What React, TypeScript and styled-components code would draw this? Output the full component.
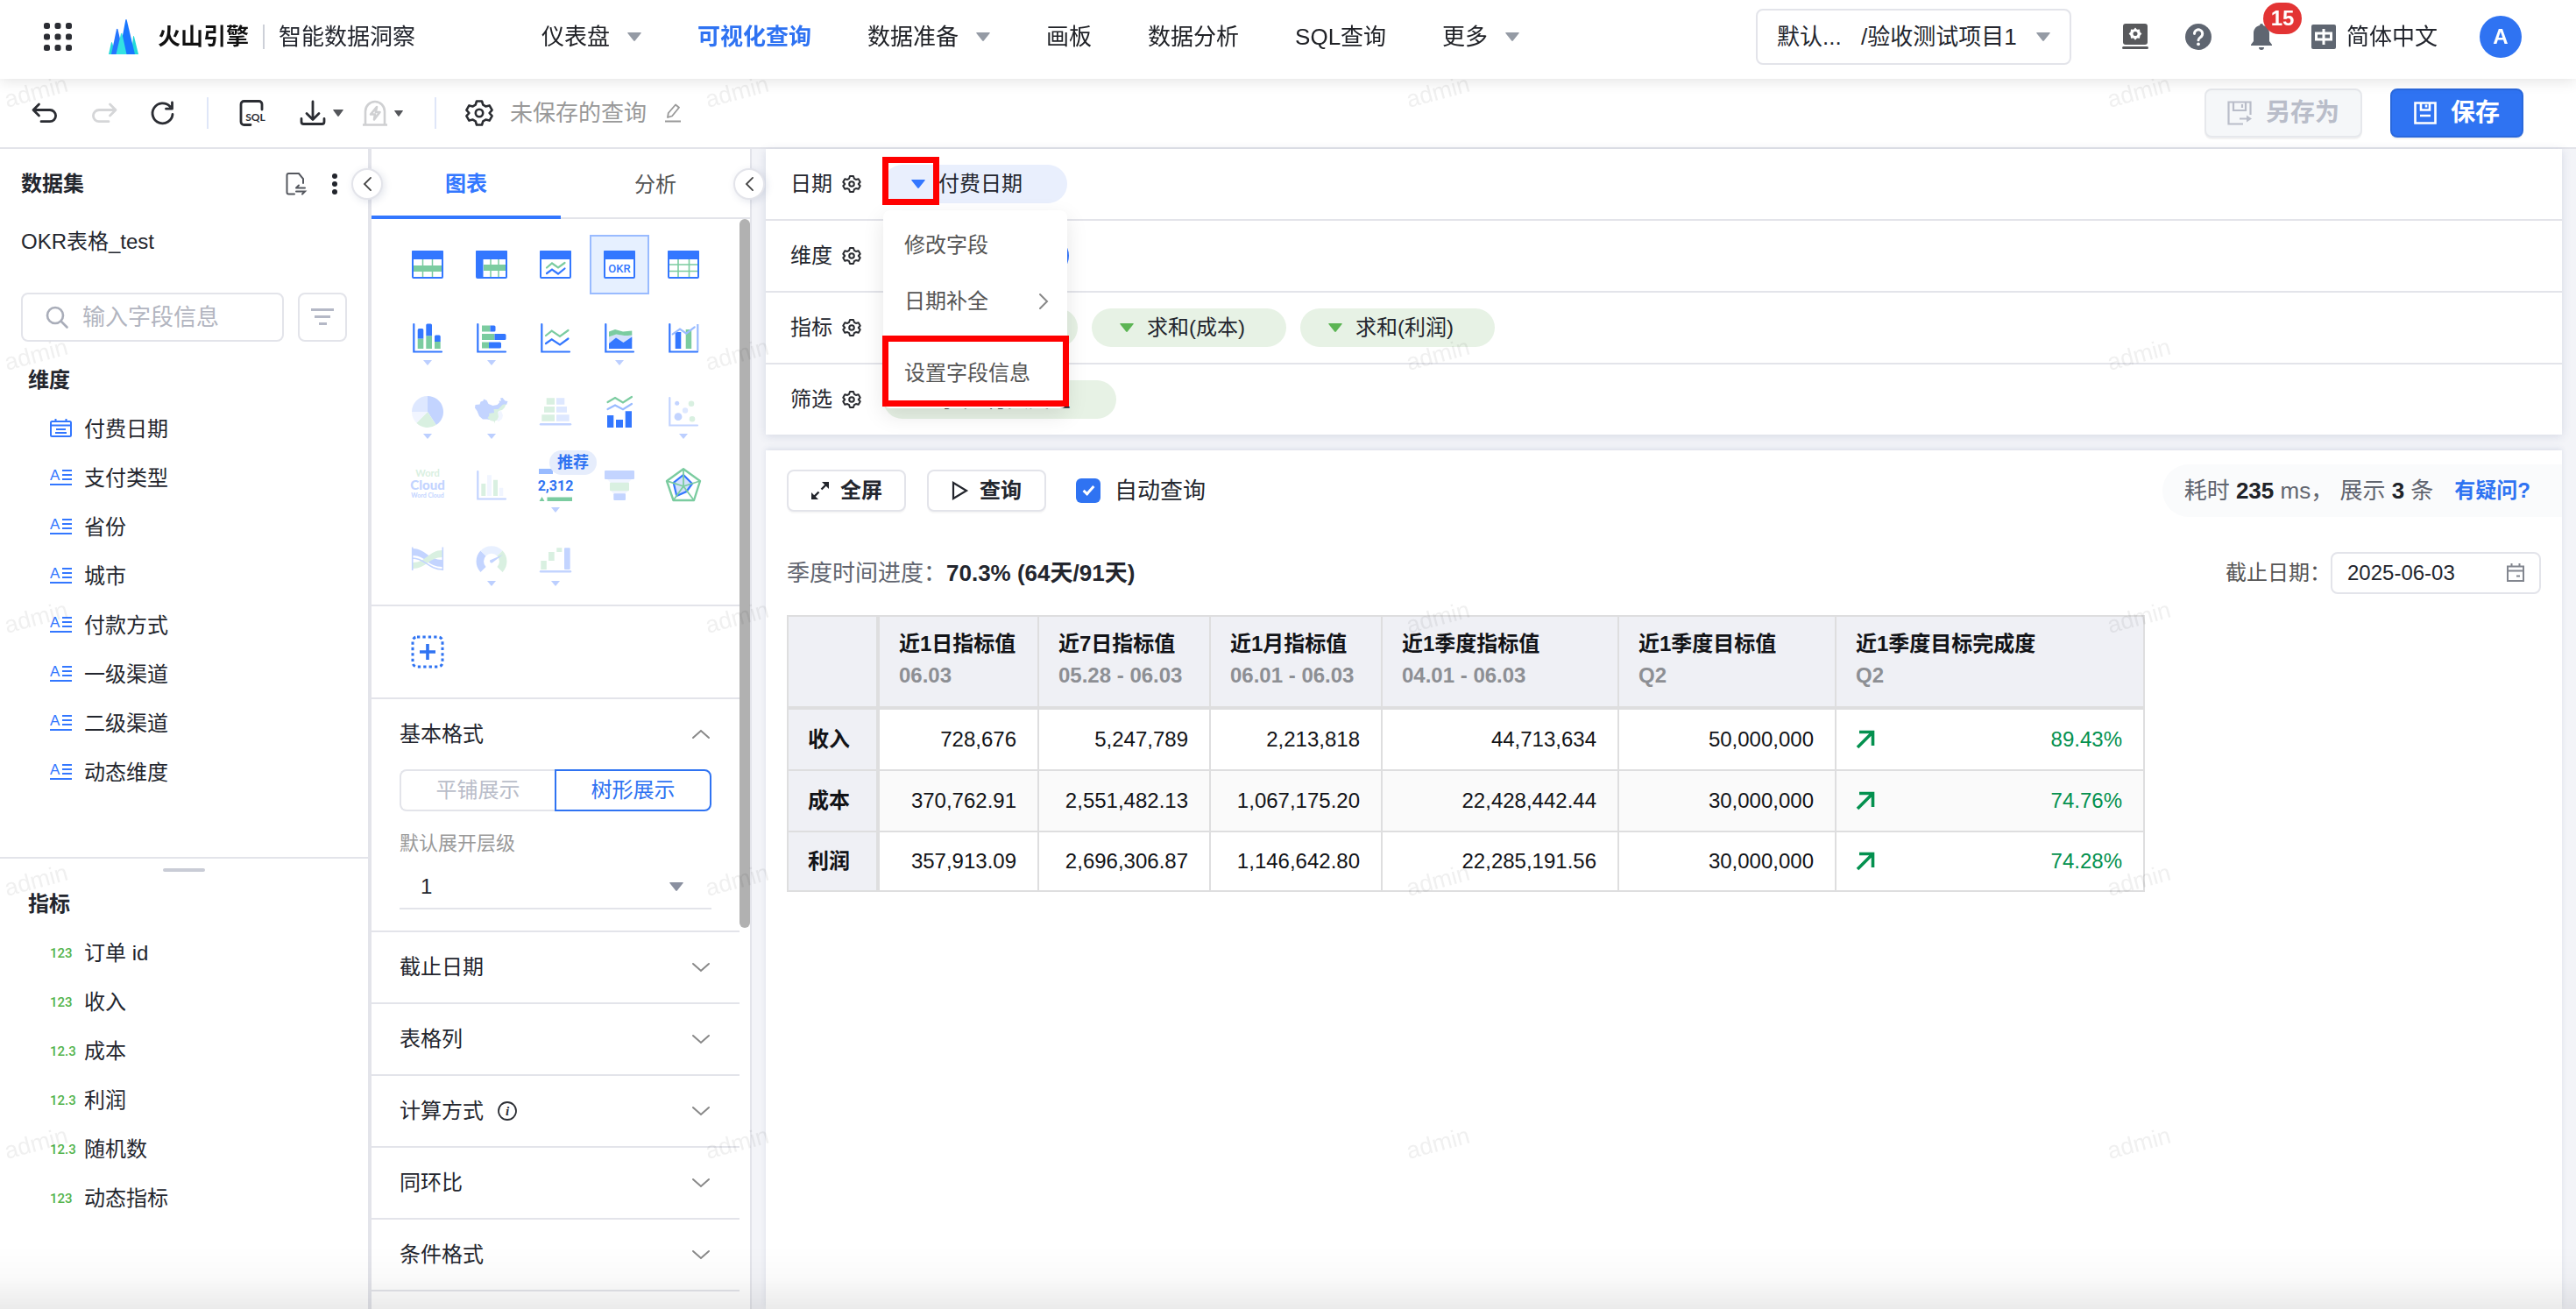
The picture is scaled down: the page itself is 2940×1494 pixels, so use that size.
import React from "react";
import styled, { createGlobalStyle, css } from "styled-components";

const blue = "#3377ff";
const green = "#7bcca0";
const softBlue = "#c3d4ff";
const softGreen = "#d9f0e1";
const paleBlue = "#deE8ff";
const faintBlue = "#f1f5ff";
const line = "#e3e4ea";
const ink = "#23262e";
const font = `"Liberation Sans", "Noto Sans CJK SC", sans-serif`;

const GlobalStyle = createGlobalStyle`
  *, *::before, *::after { box-sizing: border-box; }
  html, body { margin: 0; padding: 0; }
  body { font-family: ${font}; color: ${ink}; background: #fff; overflow: hidden; }
  button, input, select { font-family: inherit; color: inherit; margin: 0; line-height: 36px; }
  button { cursor: pointer; }
  svg { display: block; flex: none; overflow: visible; }
  ul, h2, p { margin: 0; padding: 0; }
  ul { list-style: none; }
`;

const Page = styled.div`
  display: flex;
  flex-direction: column;
  height: 100vh;
`;

const PlainButton = styled.button`
  display: flex;
  align-items: center;
  justify-content: center;
  padding: 0;
  border: 0;
  background: none;
`;

/* ---------- top bar ---------- */

const Header = styled.header`
  position: relative;
  z-index: 10;
  display: flex;
  align-items: center;
  flex: none;
  height: 90px;
  padding: 0 62px 6px 50px;
  background: #fff;
  box-shadow: 0 2px 16px rgba(0, 0, 0, 0.12);
  font-size: 26px;
  line-height: 40px;
`;

const Brand = styled.div`
  display: flex;
  align-items: center;
  width: 568px;
`;

const BrandName = styled.strong`
  margin-left: 22px;
  font-weight: 700;
  color: #111;
`;

const BrandRule = styled.span`
  width: 2px;
  height: 28px;
  margin: 0 16px;
  background: #cdd0d8;
`;

const LogoBox = styled.span`
  margin-left: 42px;
`;

const Nav = styled.nav`
  display: flex;
  gap: 64px;
  flex: 1;
`;

const NavLink = styled.a<{ $active?: boolean }>`
  display: flex;
  align-items: center;
  gap: 20px;
  color: ${(p) => (p.$active ? "#2f73f2" : "#202227")};
  font-weight: ${(p) => (p.$active ? 700 : 400)};
  text-decoration: none;
  white-space: nowrap;
`;

const ProjectPicker = styled.button`
  display: flex;
  align-items: center;
  justify-content: space-between;
  width: 360px;
  height: 64px;
  margin-right: 58px;
  padding: 0 22px;
  border: 2px solid ${line};
  border-radius: 8px;
  background: #fff;
  font-size: 26px;
  white-space: nowrap;
`;

const HeaderTools = styled.div`
  display: flex;
  align-items: center;
  gap: 42px;
`;

const BellButton = styled(PlainButton)`
  position: relative;
  width: 30px;
`;

const Badge = styled.span`
  position: absolute;
  left: 17px;
  top: -24px;
  width: 44px;
  height: 36px;
  border-radius: 18px;
  background: #e33434;
  color: #fff;
  font-size: 24px;
  font-weight: 700;
  line-height: 36px;
  text-align: center;
`;

const Language = styled(PlainButton)`
  gap: 12px;
  font-size: 26px;
  line-height: 40px;
`;

const Avatar = styled(PlainButton)`
  width: 48px;
  height: 48px;
  margin-left: 6px;
  border-radius: 50%;
  background: #2f73f2;
  color: #fff;
  font-size: 24px;
  font-weight: 700;
`;

/* ---------- tool bar ---------- */

const Toolbar = styled.div`
  display: flex;
  align-items: center;
  flex: none;
  height: 80px;
  padding: 0 60px 0 36px;
  border-bottom: 2px solid ${line};
`;

const ToolGroup = styled.div<{ $gap: number }>`
  display: flex;
  align-items: center;
  gap: ${(p) => p.$gap}px;
`;

const ToolRule = styled.span`
  width: 2px;
  height: 36px;
  margin: 0 34px 0 36px;
  background: #dfe6f8;
`;

const QueryName = styled.span`
  color: #999;
  font-size: 26px;
  line-height: 40px;
`;

const SaveActions = styled.div`
  display: flex;
  gap: 32px;
  margin-left: auto;
`;

const SaveButton = styled.button<{ $primary?: boolean }>`
  display: flex;
  align-items: center;
  justify-content: center;
  gap: 16px;
  width: ${(p) => (p.$primary ? 152 : 180)}px;
  height: 56px;
  padding: 0;
  border: 2px solid ${(p) => (p.$primary ? "#2a68dc" : "#e6e8ec")};
  border-radius: 8px;
  background: ${(p) => (p.$primary ? "#2f73f2" : "#f5f7f9")};
  color: ${(p) => (p.$primary ? "#fff" : "#b9bdc9")};
  box-shadow: 0 2px 0 rgba(0, 0, 0, 0.05);
  font-size: 28px;
  font-weight: 700;
`;

/* ---------- work area ---------- */

const Workspace = styled.div`
  display: flex;
  flex: 1;
  min-height: 0;
  background: #f3f4f8;
`;

const Sidebar = styled.aside`
  position: relative;
  flex: none;
  width: 424px;
  border-right: 4px solid ${line};
  background: #fff;
`;

const Collapse = styled(PlainButton)`
  position: absolute;
  z-index: 3;
  top: 22px;
  right: -17px;
  width: 36px;
  height: 36px;
  border: 2px solid ${line};
  border-radius: 50%;
  background: #fff;
  box-shadow: 2px 2px 8px rgba(60, 80, 130, 0.15);
`;

const SideHead = styled.div`
  display: flex;
  align-items: center;
  gap: 28px;
  height: 80px;
  padding: 0 34px 0 24px;

  h2 {
    flex: 1;
    font-size: 24px;
    font-weight: 700;
    line-height: 36px;
  }
`;

const DatasetName = styled.p`
  padding-left: 24px;
  font-size: 24px;
  line-height: 52px;
`;

const SearchRow = styled.div`
  display: flex;
  gap: 16px;
  margin: 32px 24px 16px;
`;

const SearchBox = styled.label`
  display: flex;
  align-items: center;
  flex: 1;
  gap: 16px;
  height: 56px;
  padding: 0 26px;
  border: 2px solid ${line};
  border-radius: 8px;

  input {
    width: 100%;
    min-width: 0;
    padding: 0;
    border: 0;
    outline: 0;
    background: none;
    font-size: 26px;
  }
  input::placeholder { color: #b2b5c0; opacity: 1; }
`;

const FilterButton = styled(PlainButton)`
  width: 56px;
  height: 56px;
  border: 2px solid ${line};
  border-radius: 8px;
`;

const FieldGroup = styled.section<{ $split?: boolean }>`
  position: relative;
  padding-bottom: 68px;
  ${(p) => p.$split && css`
    padding-top: 24px;
    border-top: 2px solid ${line};
  `}

  h2 {
    padding-left: 32px;
    font-size: 24px;
    font-weight: 700;
    line-height: 56px;
  }
`;

const DragHandle = styled.span`
  position: absolute;
  top: 11px;
  left: 50%;
  width: 48px;
  height: 4px;
  margin-left: -24px;
  border-radius: 2px;
  background: #c9ccd6;
`;

const FieldItem = styled.li`
  display: flex;
  align-items: center;
  gap: 14px;
  height: 56px;
  padding-left: 57px;
  font-size: 24px;
  line-height: 36px;
`;

const NumberTag = styled.span`
  width: 25px;
  color: #53b44c;
  font-family: Roboto, "Liberation Sans", sans-serif;
  font-size: 15px;
  font-weight: 500;
  line-height: 24px;
  white-space: nowrap;
`;

/* ---------- chart panel ---------- */

const ChartPanel = styled.aside`
  position: relative;
  display: flex;
  flex-direction: column;
  flex: none;
  width: 434px;
  border-right: 2px solid ${line};
  background: #fff;
`;

const Tabs = styled.div`
  display: flex;
  flex: none;
  height: 80px;
`;

const Tab = styled.button<{ $active?: boolean }>`
  flex: 1;
  padding: 4px 0 0;
  border: 0;
  border-bottom: ${(p) => (p.$active ? `4px solid ${blue}` : `2px solid ${line}`)};
  background: none;
  color: ${(p) => (p.$active ? blue : "#555")};
  font-size: 24px;
  font-weight: ${(p) => (p.$active ? 700 : 400)};
`;

const ScrollArea = styled.div`
  display: flex;
  flex: 1;
  min-height: 0;
`;

const ScrollBody = styled.div`
  flex: 1;
  overflow: hidden;
`;

const ScrollTrack = styled.div`
  width: 12px;
`;

const ScrollThumb = styled.div`
  height: 65%;
  border-radius: 6px;
  background: #b1b1b1;
`;

const ChartGrid = styled.div`
  display: grid;
  grid-template-columns: repeat(5, 68px);
  gap: 16px 5px;
  padding: 18px 30px;
  border-bottom: 2px solid ${line};
`;

const ChartCell = styled(PlainButton)<{ $selected?: boolean }>`
  position: relative;
  width: 68px;
  height: 68px;
  border: 2px solid ${(p) => (p.$selected ? "#99bbff" : "transparent")};
  background: ${(p) => (p.$selected ? "#e6f0ff" : "none")};
`;

const CellCaret = styled.svg`
  position: absolute;
  left: 50%;
  bottom: 1px;
  margin-left: -5px;
`;

const Recommend = styled.span`
  position: absolute;
  top: -8px;
  left: 25px;
  width: 54px;
  border-radius: 14px;
  background: #e6edfc;
  color: #2f73f2;
  font-size: 18px;
  font-weight: 700;
  line-height: 28px;
  text-align: center;
`;

const CustomCharts = styled.div`
  display: flex;
  height: 106px;
  padding-left: 45px;
  border-bottom: 2px solid ${line};
`;

const Section = styled.section`
  border-bottom: 2px solid ${line};
`;

const SectionHead = styled.button`
  display: flex;
  align-items: center;
  width: 100%;
  height: 80px;
  padding: 0 34px 0 32px;
  border: 0;
  background: none;
  color: ${ink};
  font-size: 24px;

  span { margin-right: 16px; }
  svg:last-child { margin-left: auto; }
`;

const SectionBody = styled.div`
  padding: 0 32px 24px;
`;

const Segments = styled.div`
  display: flex;
  height: 48px;
`;

const Segment = styled.button<{ $active?: boolean }>`
  flex: 1;
  padding: 0;
  border: 2px solid ${(p) => (p.$active ? "#2f73f2" : line)};
  border-radius: ${(p) => (p.$active ? "0 8px 8px 0" : "8px 0 0 8px")};
  ${(p) => !p.$active && "border-right: 0;"}
  background: #fff;
  color: ${(p) => (p.$active ? "#2f73f2" : "#b9bdc9")};
  font-size: 24px;
`;

const LevelLabel = styled.label`
  display: block;
  margin-top: 20px;
  color: #999;
  font-size: 22px;
  line-height: 34px;
`;

const LevelPicker = styled.div`
  display: flex;
  align-items: center;
  height: 58px;
  padding: 8px 32px 0 0;
  border-bottom: 2px solid ${line};

  select {
    flex: 1;
    padding: 0 0 0 24px;
    border: 0;
    outline: 0;
    appearance: none;
    background: none;
    font-size: 24px;
  }
`;

/* ---------- main column ---------- */

const Main = styled.main`
  display: flex;
  flex-direction: column;
  flex: 1;
  min-width: 0;
  margin: 0 16px;
`;

const Shelves = styled.div`
  position: relative;
  z-index: 2;
  background: #fff;
  box-shadow: 0 2px 10px rgba(60, 80, 130, 0.16);
`;

const Shelf = styled.div`
  display: flex;
  align-items: center;
  height: 82px;
  padding: 0 28px;
  border-bottom: 2px solid ${line};
  font-size: 24px;
  line-height: 36px;

  &:last-child { height: 80px; border-bottom: 0; }
`;

const ShelfLabel = styled.span`
  margin-right: 12px;
`;

const Pills = styled.div`
  display: flex;
  gap: 16px;
  margin-left: 26px;
`;

const PillSlot = styled.div`
  position: relative;
`;

const Pill = styled.button<{ $tone: "blue" | "green" | "active"; $wide?: boolean }>`
  display: flex;
  align-items: center;
  gap: 15px;
  min-width: ${(p) => (p.$wide ? 266 : p.$tone === "active" ? 212 : 210)}px;
  height: 44px;
  padding: 0 47px 0 32px;
  border: 0;
  border-radius: 22px;
  background: ${(p) => ({ blue: "#e9effd", green: "#e7f2e5", active: blue })[p.$tone]};
  color: ${ink};
  font-size: 24px;
  white-space: nowrap;
`;

const Menu = styled.div`
  position: absolute;
  z-index: 4;
  top: 52px;
  left: 0;
  width: 210px;
  padding: 8px 0;
  border-radius: 8px;
  background: #fff;
  box-shadow: 0 8px 24px rgba(0, 0, 0, 0.1);
`;

const MenuItem = styled.button<{ $apart?: boolean }>`
  display: flex;
  align-items: center;
  justify-content: space-between;
  width: 100%;
  height: 64px;
  margin-top: ${(p) => (p.$apart ? 18 : 0)}px;
  padding: 0 22px 0 24px;
  border: 0;
  background: none;
  color: #555;
  font-size: 24px;
`;

const Highlight = styled.span<{ $top: number; $width: number; $height: number }>`
  position: absolute;
  z-index: 5;
  left: -1px;
  top: ${(p) => p.$top}px;
  width: ${(p) => p.$width}px;
  height: ${(p) => p.$height}px;
  border: 7px solid #ff0000;
  pointer-events: none;
`;

const Results = styled.section`
  flex: 1;
  margin-top: 18px;
  padding-top: 16px;
  background: #fff;
  box-shadow: 0 -2px 6px rgba(60, 80, 130, 0.12);
`;

const ResultBar = styled.div`
  display: flex;
  align-items: center;
  height: 60px;
  padding-left: 24px;
`;

const ActionButton = styled.button`
  display: flex;
  align-items: center;
  justify-content: center;
  gap: 12px;
  width: 136px;
  height: 48px;
  margin-right: 24px;
  padding: 0;
  border: 2px solid ${line};
  border-radius: 8px;
  background: #fff;
  box-shadow: 0 2px 0 rgba(0, 0, 0, 0.03);
  font-size: 24px;
  font-weight: 700;
`;

const AutoQuery = styled.label`
  display: flex;
  align-items: center;
  gap: 16px;
  margin-left: 10px;
  font-size: 26px;
  line-height: 40px;

  input {
    display: grid;
    place-items: center;
    width: 28px;
    height: 28px;
    margin: 0;
    border-radius: 6px;
    appearance: none;
    background: #2f73f2;
  }
  input::after {
    content: "";
    width: 7px;
    height: 13px;
    margin-bottom: 4px;
    border: solid #fff;
    border-width: 0 3px 3px 0;
    transform: rotate(42deg);
  }
`;

const Stats = styled.div`
  display: flex;
  align-items: center;
  height: 60px;
  margin-left: auto;
  padding: 0 36px 0 25px;
  border-radius: 30px 0 0 30px;
  background: #fafbfc;
  color: #61656f;
  font-size: 26px;
  line-height: 40px;
  white-space: pre;

  b { color: #202329; }
  a {
    margin-left: 24px;
    color: #2f73f2;
    font-size: 24px;
    font-weight: 700;
    text-decoration: none;
  }
`;

const DateBar = styled.div`
  display: flex;
  align-items: center;
  justify-content: space-between;
  height: 48px;
  margin: 40px 24px 24px;
  font-size: 26px;
  line-height: 40px;
  color: #61656f;

  b { color: #23262e; }
`;

const DateField = styled.label`
  display: flex;
  align-items: center;
  color: #555;
  font-size: 24px;
`;

const DateBox = styled.span`
  display: flex;
  align-items: center;
  width: 240px;
  height: 48px;
  padding: 0 17px;
  border: 2px solid ${line};
  border-radius: 8px;

  input {
    flex: 1;
    min-width: 0;
    padding: 0;
    border: 0;
    outline: 0;
    background: none;
    color: ${ink};
    font-size: 24px;
  }
`;

const Table = styled.table`
  margin-left: 24px;
  border-spacing: 0;
  border-left: 2px solid #dededf;
  table-layout: fixed;
  width: 1550px;
  font-size: 24px;
  line-height: 36px;
  color: #121317;

  th, td {
    padding: 0 24px 0 22px;
    border-right: 2px solid #dededf;
    border-bottom: 2px solid #dededf;
  }
  thead th {
    height: 108px;
    border-top: 2px solid #dededf;
    border-bottom-width: 4px;
    background: #eff0f5;
    text-align: left;
    vertical-align: top;
    padding-top: 13px;
    white-space: nowrap;
  }
  th { font-weight: 700; }
  th:first-child { border-right-width: 4px; }
  thead small { display: block; color: #8d8f94; font-size: 24px; }
  tbody th { background: #eff0f5; text-align: left; }
  tbody td { height: 70px; text-align: right; }
  tbody tr:nth-child(2) td { background: #fafafa; }
  tbody tr:last-child td { height: 68px; }
`;

const Rate = styled.span`
  display: flex;
  align-items: center;
  justify-content: space-between;
  color: #04914f;
`;

const Watermark = styled.svg`
  position: fixed;
  z-index: 6;
  inset: 0;
  width: 100%;
  height: 100%;
  pointer-events: none;
`;

const BottomShade = styled.div`
  position: fixed;
  z-index: 7;
  left: 0;
  right: 0;
  bottom: 0;
  height: 72px;
  background: linear-gradient(to bottom, rgba(0, 0, 0, 0), rgba(0, 0, 0, 0.02) 50%, rgba(0, 0, 0, 0.08));
  pointer-events: none;
`;

/* ---------- icons ---------- */

const Caret = ({ size = 14, color = "#959ba5" }: { size?: number; color?: string }) => (
  <svg width={size} height={Math.round(size * 0.65)} viewBox="0 0 16 10" preserveAspectRatio="none" aria-hidden="true">
    <path d="M1 0h14q1.400 0 .6 1L9 9.300q-1 1.200-2 0L.4 1Q-.4 0 1 0Z" fill={color} />
  </svg>
);

const Chevron = ({ dir, w = 10, h = 18, color = "#888" }: { dir: "left" | "right" | "up" | "down"; w?: number; h?: number; color?: string }) => {
  const d = { left: "M9 1 1 9l8 8", right: "M1 1l8 8-8 8", up: "M1 9l9-8 9 8", down: "M1 1l9 8 9-8" }[dir];
  const box = dir === "up" || dir === "down" ? "0 0 20 10" : "0 0 10 18";
  return (
    <svg width={w} height={h} viewBox={box} aria-hidden="true">
      <path d={d} fill="none" stroke={color} strokeWidth="2" strokeLinecap="round" />
    </svg>
  );
};

const Gear = ({ size }: { size: number }) => (
  <svg width={size} height={size} viewBox="0 0 30 30" fill="none" stroke="#2a2c31" strokeWidth={size > 24 ? 2.6 : 3} strokeLinejoin="round" aria-hidden="true">
    <path d="M12 1.500h6l1.300 4.200 3 1.700 4.300-1 3 5.200-3 3.400 3 3.400-3 5.200-4.300-1-3 1.700-1.300 4.200h-6l-1.300-4.200-3-1.700-4.300 1-3-5.200 3-3.400-3-3.400 3-5.200 4.300 1 3-1.700Z" />
    <circle cx="15" cy="15" r="4.200" />
  </svg>
);

const AppsIcon = () => (
  <svg width="32" height="32" fill="#2b2d33" aria-hidden="true">
    {[0, 12.500, 25].map((x) => [0, 12.500, 25].map((y) => <rect key={`${x}-${y}`} x={x} y={y} width="7" height="7" rx="2.500" />))}
  </svg>
);

const Logo = () => (
  <svg width="34" height="40" viewBox="0 0 34 40" aria-label="火山引擎" role="img">
    <path d="M0 40 3 26.500q.5-1 1 0L8 40ZM26 40l2-20.500q.5-1.200 1 0L34 40Z" fill="#23d9d9" />
    <path d="M3 40 9 11.500q.8-1.500 1.500 0L17 40Z" fill="#2676ff" />
    <path d="M12 40 19.300.8q.7-1.500 1.400 0L30 40Z" fill="#1877ff" />
    <path d="M8.500 40 14 16.500q.7-1.500 1.400 0L20.500 40Z" fill="#33e2e2" />
  </svg>
);

const ServiceIcon = () => (
  <svg width="30" height="30" viewBox="0 0 30 30" aria-hidden="true">
    <rect x="1" y="0" width="28" height="24" rx="3" fill="#58595c" />
    <rect x="0" y="26" width="30" height="3" rx="1.500" fill="#58595c" />
    <path d="M15 4.500l2 2.300 3-.4.400 3 2 2.200-2 2.200-.4 3-3-.4-2 2.300-2-2.300-3 .4-.4-3-2-2.200 2-2.200.4-3 3 .4Z" fill="#fff" />
    <circle cx="15" cy="11.600" r="2.500" fill="#58595c" />
  </svg>
);

const HelpIcon = () => (
  <svg width="30" height="30" viewBox="0 0 30 30" aria-hidden="true">
    <circle cx="15" cy="15" r="15" fill="#5f6671" />
    <path d="M10.500 11.500a4.600 4.600 0 1 1 7 3.900c-1.700 1.100-2.500 1.700-2.500 3.400" fill="none" stroke="#fff" strokeWidth="3" strokeLinecap="round" />
    <circle cx="15" cy="23.300" r="1.900" fill="#fff" />
  </svg>
);

const BellIcon = () => (
  <svg width="26" height="30" viewBox="0 0 26 30" fill="#5f6671" aria-hidden="true">
    <path d="M13 0a2 2 0 0 1 2 2c4.500 1 7 4.500 7 9v9l3 4v1H1v-1l3-4v-9c0-4.500 2.500-8 7-9a2 2 0 0 1 2-2ZM10 27h6a3 3 0 0 1-6 0Z" />
  </svg>
);

const LangIcon = () => (
  <svg width="28" height="28" viewBox="0 0 28 28" aria-hidden="true">
    <rect width="28" height="28" rx="2" fill="#5f6671" />
    <path d="M5.500 10h17v7h-17ZM14 5v18" fill="none" stroke="#fff" strokeWidth="3" />
  </svg>
);

const UndoIcon = ({ flip }: { flip?: boolean }) => (
  <svg width="30" height="24" viewBox="0 0 30 24" fill="none" stroke={flip ? "#d5d6d8" : "#2b2d33"} strokeWidth="2.800" strokeLinecap="round" strokeLinejoin="round" aria-hidden="true">
    <path d={flip ? "M21.500 2 28 8.500 21.500 15M27 8.500H9a6.500 6.500 0 0 0 0 13.200h11" : "M8.500 2 2 8.500 8.500 15M3 8.500h18a6.500 6.500 0 0 1 0 13.200H11"} />
  </svg>
);

const RefreshIcon = () => (
  <svg width="28" height="28" viewBox="0 0 28 28" fill="none" stroke="#2b2d33" strokeWidth="2.800" strokeLinecap="round" strokeLinejoin="round" aria-hidden="true">
    <path d="M25 15.500A11.500 11.500 0 1 1 22 6.500M24.500 2v7.200h-7" />
  </svg>
);

const SqlIcon = () => (
  <svg width="32" height="30" viewBox="0 0 32 30" aria-hidden="true">
    <path d="M27 11V5a3.500 3.500 0 0 0-3.500-3.500h-17A3.500 3.500 0 0 0 3 5v20a3.500 3.500 0 0 0 3.500 3.500H14" fill="none" stroke="#2b2d33" strokeWidth="2.800" strokeLinecap="round" />
    <text x="19.500" y="23.500" textAnchor="middle" fontSize="12" fontWeight="700" fontFamily="Lato, sans-serif" fill="#2b2d33">SQL</text>
  </svg>
);

const DownloadIcon = () => (
  <svg width="30" height="28" viewBox="0 0 30 28" fill="none" stroke="#2b2d33" strokeWidth="2.800" strokeLinecap="round" strokeLinejoin="round" aria-hidden="true">
    <path d="M15 1v20M8 14.500l7 7 7-7M2 20.500V24q0 2.500 2.500 2.500h21Q28 26.500 28 24v-3.500" />
  </svg>
);

const AlarmIcon = () => (
  <svg width="28" height="30" viewBox="0 0 28 30" fill="none" stroke="#cfd0d2" strokeWidth="2.600" strokeLinejoin="round" aria-hidden="true">
    <path d="M3 28V13a11 11 0 0 1 22 0v15M0 28.500h28M16 8l-7 8.500h5l-1 6 6.500-8.500h-4.700Z" />
  </svg>
);

const PencilIcon = () => (
  <svg width="20" height="22" viewBox="0 0 20 22" fill="none" stroke="#999" strokeWidth="1.800" strokeLinejoin="round" aria-hidden="true">
    <path d="M4 16l.8-5L13 1.500l4 3.300L9 14.500ZM1 20.500h18" />
  </svg>
);

const SaveAsIcon = () => (
  <svg width="28" height="28" viewBox="0 0 28 28" fill="none" stroke="#b9bdc9" strokeWidth="2.200" aria-hidden="true">
    <path d="M26.500 16V1.500h-25v25H18M7 1.500V11h14V1.500M17 4v4M14 20.500h11" />
    <path d="M22 16.500l6 4-6 4Z" fill="#b9bdc9" stroke="none" />
  </svg>
);

const SaveIcon = () => (
  <svg width="26" height="26" viewBox="0 0 26 26" fill="none" stroke="#fff" strokeWidth="2.600" aria-hidden="true">
    <path d="M1.500 1.500h23v23h-23ZM8 1.500v8h10v-8M14 3.500v3M7 16h12" />
  </svg>
);

const DocSwapIcon = () => (
  <svg width="24" height="26" viewBox="0 0 24 26" fill="none" stroke="#55585f" strokeWidth="2" strokeLinecap="round" aria-hidden="true">
    <path d="M20 12V7l-5-6H3.500Q1.500 1 1.500 3v19.500q0 2 2 2H10M12 17.500h10M15 14.500l-3 3M12 21.500h10l-3 3" />
  </svg>
);

const MoreIcon = () => (
  <svg width="8" height="26" fill="#22252c" aria-hidden="true">
    <circle cx="4" cy="4" r="3" /><circle cx="4" cy="13" r="3" /><circle cx="4" cy="22" r="3" />
  </svg>
);

const SearchIcon = () => (
  <svg width="26" height="26" viewBox="0 0 26 26" fill="none" stroke="#a9adb9" strokeWidth="2.600" strokeLinecap="round" aria-hidden="true">
    <circle cx="11" cy="11" r="9" /><path d="M18 18l6.500 6.500" />
  </svg>
);

const FilterIcon = () => (
  <svg width="26" height="20" fill="#b4b8c6" aria-hidden="true">
    <rect width="26" height="3" /><rect x="4" y="8" width="18" height="3" /><rect x="9" y="16" width="9" height="3" />
  </svg>
);

const CalendarField = () => (
  <svg width="25" height="22" viewBox="0 0 25 22" fill="none" stroke={blue} strokeWidth="2" aria-hidden="true">
    <rect x="1" y="2" width="23" height="17" rx="1.500" /><path d="M1 6.500h23M6.500-1v3M18.500-1v3M7 11h11M6 15h13" />
  </svg>
);

const TextField = () => (
  <svg width="25" height="22" viewBox="0 0 25 22" stroke={blue} strokeWidth="2" aria-hidden="true">
    <text x="0" y="13" fontSize="17" fill={blue} stroke="none" fontFamily={font}>A</text>
    <path d="M14 2h11M14 7h11M14 12h11M0 18h25" />
  </svg>
);

const InfoIcon = () => (
  <svg width="22" height="22" viewBox="0 0 22 22" aria-hidden="true">
    <circle cx="11" cy="11" r="10" fill="none" stroke="#2b2d33" strokeWidth="1.800" />
    <text x="11" y="16" textAnchor="middle" fontSize="15" fontStyle="italic" fontWeight="700" fontFamily="Liberation Serif, serif" fill="#2b2d33">i</text>
  </svg>
);

const ExpandIcon = () => (
  <svg width="22" height="22" viewBox="0 0 22 22" fill="none" stroke="#22252c" strokeWidth="2.400" aria-hidden="true">
    <path d="M12.500 9.500 19 3M9.500 12.500 3 19" /><path d="M13 1h8v8ZM1 13v8h8Z" fill="#22252c" stroke="none" />
  </svg>
);

const PlayIcon = () => (
  <svg width="20" height="22" viewBox="0 0 20 22" fill="none" stroke="#22252c" strokeWidth="2.200" aria-hidden="true">
    <path d="M2 2l15 9-15 9Z" />
  </svg>
);

const CalendarIcon = () => (
  <svg width="20" height="22" viewBox="0 0 20 22" fill="none" stroke="#82868f" strokeWidth="2" aria-hidden="true">
    <path d="M1 3.500h18V20H1ZM1 8.500h18M5.500 0v4M14.500 0v4M11 14.500h4" />
  </svg>
);

const TrendUp = () => (
  <svg width="22" height="22" viewBox="0 0 22 22" fill="none" stroke="#04914f" strokeWidth="3.600" role="img" aria-label="上升">
    <path d="M4 2.500h15.500V18M19 3 2 20" />
  </svg>
);

const Frame = ({ children }: { children?: React.ReactNode }) => (
  <>
    <rect x="1" y="3" width="34" height="30" rx="1" fill="#fff" />
    {children}
    <rect x="1" y="3" width="34" height="30" rx="1" fill="none" stroke={blue} strokeWidth="2" />
    <rect x="0" y="2" width="36" height="10" rx="1" fill={blue} />
  </>
);

const Axes = ({ color = blue }: { color?: string }) => (
  <path d="M2.300 2v31.500H34" fill="none" stroke={color} strokeWidth="2.200" strokeLinecap="round" />
);

const Zig = ({ points, color }: { points: string; color: string }) => (
  <polyline points={points} fill="none" stroke={color} strokeWidth="2.200" strokeLinecap="round" />
);

type ChartKind = { id: string; label: string; caret?: boolean; selected?: boolean; tag?: string; art: React.ReactNode };

const charts: ChartKind[] = [
  { id: "table", label: "表格", art: <Frame><path d="M12.500 12v21M23.500 12v21" stroke={green} strokeWidth="1.500" /><rect x="1" y="19" width="34" height="7" fill={green} /></Frame> },
  { id: "pivot", label: "透视表", art: <Frame><path d="M17 12v21M26 12v21" stroke={green} strokeWidth="1.500" /><rect x="9" y="18" width="26" height="7" fill={green} /><rect x="1" y="8" width="7.500" height="25" fill={blue} /></Frame> },
  { id: "trend", label: "趋势表", art: <Frame><Zig points="8,21.500 14,16.500 21,21.500 28.500,16" color={green} /><Zig points="8,28 14,23.500 21,28.500 28.500,22.500" color={blue} /></Frame> },
  { id: "okr", label: "OKR表格", selected: true, art: <Frame><text x="18" y="27" textAnchor="middle" fontSize="13" fontFamily="Roboto, sans-serif" fontWeight="500" fill={blue}>OKR</text></Frame> },
  { id: "detail", label: "明细表", art: <Frame><path d="M12 12v21M24.500 12v21M1 18h34M1 25.500h34" stroke={green} strokeWidth="1.600" /></Frame> },
  {
    id: "column", label: "柱状图", caret: true, art: <><Axes />
      <path d="M6.700 18.500h6.600V30H6.700ZM16.300 15.300H23V30h-6.700ZM26 22h6.700v8H26Z" fill={green} />
      <path d="M6.700 18.500V8.500q0-1.500 1.500-1.500h3.600q1.500 0 1.500 1.500v10ZM16.300 15.300V3q0-1.500 1.500-1.500h3.700Q23 1.500 23 3v12.300ZM26 22v-6q0-1.500 1.500-1.500h3.700q1.500 0 1.500 1.500v6Z" fill={blue} /></>,
  },
  {
    id: "bar", label: "条形图", caret: true, art: <><Axes />
      <path d="M7 3.500h9.500v7H7ZM7 13h14.500v7H7ZM7 22.500h8v7H7Z" fill={green} />
      <path d="M16.500 3.500H21q1.500 0 1.500 1.500v4q0 1.500-1.500 1.500h-4.500ZM21.500 13H33q1.500 0 1.500 1.500v4q0 1.500-1.500 1.500H21.500ZM15 22.500h12.500q1.500 0 1.500 1.500v4q0 1.500-1.500 1.500H15Z" fill={blue} /></>,
  },
  { id: "line", label: "折线图", art: <><Axes /><Zig points="7,15 13.700,9.700 23,16 32.500,9" color={green} /><Zig points="7,24 13.700,19.300 23,25.500 32.500,18.500" color={blue} /></> },
  {
    id: "area", label: "面积图", caret: true, art: <><Axes />
      <path d="M6 17l8-4 9 2 9.300-2v9L6 28Z" fill="#d3e0fb" />
      <path d="M6 10.500 13 8l9 2.500 10.300-1v5q-5 .5-9 .5l-9-1.500L6 16.500Z" fill={green} />
      <path d="M6 24l8-6.500 8.500 5.500 9.800-6.500V30H6Z" fill={blue} /></>,
  },
  {
    id: "combo", label: "双轴图", art: <><Axes /><path d="M34.300 2v31" stroke="#99bbff" strokeWidth="2.200" />
      <rect x="8.700" y="11" width="6.600" height="19" fill={blue} /><rect x="20.700" y="8" width="6.500" height="22" fill={green} />
      <Zig points="5.700,13.300 14,7.700 21.300,12.700 30.700,5.300" color="#99bbff" /></>,
  },
  {
    id: "pie", label: "饼图", caret: true, art: <>
      <path d="M18 18V0a18 18 0 0 1 9.800 33.100Z" fill={softBlue} /><path d="M18 18l9.800 15.100A18 18 0 0 1 5.300 30.700Z" fill={softGreen} />
      <path d="M18 18 5.300 30.700A18 18 0 0 1 0 18Z" fill={faintBlue} /><path d="M18 18H0A18 18 0 0 1 18 0Z" fill={paleBlue} /></>,
  },
  {
    id: "map", label: "地图", caret: true, art: <>
      <path d="M-.5 10l5-.5 1-3 3-1 .5-2 3.500 1.500 2 4 5 2 5-1 2.500-2.500-.5-2 2.500 0-1-3 2.500-.5 3 3.500 3 .5-1.500 4-3 .5-1.500 3-4 2-1.500 4-2 6-5 2-5-1-5 0-4-3.500-2.500-6-2.500-3.500Z" fill={softBlue} />
      <path d="M15 20l6-1-.5-4 5 0 5-5 4-1-1.500 4-3 3-4 1 1 4-2 6-3 1.500 0 3-1-2.500-4-1-3.500-3 2-3Z" fill={softGreen} />
      <path d="M25 18l4-1 2 5-1 4-4 3-2-1 2-4Z" fill={faintBlue} /></>,
  },
  {
    id: "pyramid", label: "对比条形图", art: <>
      <path d="M7.700 2.300H17v7.400H7.700ZM5 12h12v6.700H5ZM2.300 21.300H17v7.400H2.300Z" fill={softGreen} />
      <path d="M19 2.300h9.300v7.400H19ZM19 12h12v6.700H19ZM19 21.300h14.700v7.400H19Z" fill={paleBlue} />
      <path d="M1 32.300h34" stroke={softBlue} strokeWidth="2.400" strokeLinecap="round" /></>,
  },
  {
    id: "mixed", label: "组合图", art: <>
      <Zig points="4.500,7 13,2 22,7.500 32,1" color={green} /><Zig points="4.500,15 13,10.500 22,15.300 32,9" color="#99bbff" />
      <path d="M4 22h7.300v14H4ZM14 27h8v9h-8ZM24.700 17.300H32V36h-7.300Z" fill={blue} /></>,
  },
  {
    id: "scatter", label: "散点图", caret: true, art: <><Axes color={softBlue} />
      <circle cx="10.700" cy="8.300" r="2.500" fill={softBlue} /><circle cx="27" cy="8.700" r="3.300" fill={softGreen} />
      <circle cx="20" cy="16.500" r="3.200" fill={paleBlue} /><circle cx="12" cy="23.700" r="4.400" fill={softBlue} /><circle cx="28" cy="26.300" r="3.300" fill={softGreen} /></>,
  },
  {
    id: "cloud", label: "词云", art: <g textAnchor="middle" fontFamily="Lato, sans-serif" fontWeight="700">
      <text x="18" y="8" fontSize="11" fill={softGreen}>Word</text><text x="18" y="23" fontSize="15" fontWeight="900" fill={softBlue}>Cloud</text>
      <text x="18" y="32" fontSize="7" fill={softBlue}>Word Cloud</text></g>,
  },
  {
    id: "histogram", label: "直方图", art: <><Axes color={softBlue} />
      <path d="M6.300 16h5v14h-5ZM20 11.700h5V30h-5Z" fill={softGreen} /><path d="M13 6.300h5V30h-5ZM26.700 20.700h4.500V30h-4.500Z" fill={faintBlue} /></>,
  },
  {
    id: "metric", label: "指标卡", caret: true, tag: "推荐", art: <>
      <rect x="-1" y="-1" width="16" height="6" fill="#99bbff" />
      <text x="18" y="24" textAnchor="middle" fontSize="16" fontWeight="700" fontFamily="Roboto, sans-serif" fill="#2f73f2">2,312</text>
      <path d="M-.5 36 2.500 31l3 5ZM8.500 31.500H37V36H8.500Z" fill={green} /></>,
  },
  {
    id: "funnel", label: "漏斗图", art: <>
      <path d="M4 11h28l-4 4H8ZM8 24h20l-4 4H12Z" fill={faintBlue} /><rect x="1" y="1" width="34" height="10" rx="1" fill={softBlue} />
      <rect x="7" y="14.700" width="22" height="9.500" rx="1" fill={softGreen} /><rect x="11.300" y="27.300" width="13.700" height="7.700" rx="1" fill={softBlue} /></>,
  },
  {
    id: "radar", label: "雷达图", art: <>
      <path d="M18-.7 37 13 30 35H6.500L-1 13Z" fill="none" stroke={green} strokeWidth="2.400" strokeLinejoin="round" />
      <path d="M18 6 28 16l-6.500 9L10.300 30 6.700 15Z" fill="#d3e0fb" stroke={blue} strokeWidth="2.200" />
      <path d="M18 19V-.7M18 19l19-6M18 19l12 16M18 19 6.500 35M18 19-1 13" stroke={green} strokeWidth="1.800" /></>,
  },
  {
    id: "sankey", label: "桑基图", art: <>
      <path d="M1 6c14 0 18 13 34 13v8C18 27 16 14 1 14Z" fill={softBlue} />
      <path d="M1 22c16 0 18-14 34-14v8C20 16 16 29 1 29Z" fill={softGreen} />
      <path d="M1 17c14 0 18 13 34 13M.7 4.500v26.500M35.300 4.500v26.500" fill="none" stroke={softBlue} strokeWidth="1.600" /></>,
  },
  {
    id: "gauge", label: "仪表盘", caret: true, art: <g fill="none" strokeWidth="8.500">
      <path d="M8.500 30A13.400 13.400 0 0 1 8.500 11.500" stroke={softBlue} /><path d="M8.500 11.500a13.400 13.400 0 0 1 19 0" stroke="#e8f0ff" />
      <path d="M27.500 11.500a13.400 13.400 0 0 1 0 18.500" stroke={softGreen} /><path d="M16 19.500 31 13l-12.500 9.500q-2.500.5-2.500-3Z" fill={softBlue} stroke="none" /></g>,
  },
  {
    id: "waterfall", label: "瀑布图", caret: true, art: <>
      <path d="M1.300 20h6.500v10H1.300ZM10 10h6.700v10H10ZM19.300 5.300h6V10h-6Z" fill={softGreen} /><rect x="28" y="5.300" width="6.700" height="24.700" rx="1" fill={softBlue} />
      <path d="M1 32.300h34" stroke={softBlue} strokeWidth="2.400" strokeLinecap="round" /></>,
  },
];

/* ---------- data ---------- */

const navItems = [
  { label: "仪表盘", caret: true }, { label: "可视化查询", active: true }, { label: "数据准备", caret: true },
  { label: "画板" }, { label: "数据分析" }, { label: "SQL查询" }, { label: "更多", caret: true },
];
const dimensions = ["付费日期", "支付类型", "省份", "城市", "付款方式", "一级渠道", "二级渠道", "动态维度"];
const metrics = [["123", "订单 id"], ["123", "收入"], ["12.3", "成本"], ["12.3", "利润"], ["12.3", "随机数"], ["123", "动态指标"]];
const columns: [string, string, number][] = [
  ["近1日指标值", "06.03", 182], ["近7日指标值", "05.28 - 06.03", 196], ["近1月指标值", "06.01 - 06.03", 196],
  ["近1季度指标值", "04.01 - 06.03", 270], ["近1季度目标值", "Q2", 248], ["近1季度目标完成度", "Q2", 352],
];
const rows = [
  ["收入", "728,676", "5,247,789", "2,213,818", "44,713,634", "50,000,000", "89.43%"],
  ["成本", "370,762.91", "2,551,482.13", "1,067,175.20", "22,428,442.44", "30,000,000", "74.76%"],
  ["利润", "357,913.09", "2,696,306.87", "1,146,642.80", "22,285,191.56", "30,000,000", "74.28%"],
];

/* ---------- parts ---------- */

const FieldPill = ({ tone, wide, children }: { tone: "blue" | "green"; wide?: boolean; children: string }) => (
  <Pill $tone={tone} $wide={wide}><Caret size={16} color={tone === "blue" ? blue : "#5cb554"} />{children}</Pill>
);

const ShelfRow = ({ label, children }: { label: string; children: React.ReactNode }) => (
  <Shelf>
    <ShelfLabel>{label}</ShelfLabel>
    <PlainButton aria-label={`${label}设置`}><Gear size={20} /></PlainButton>
    <Pills>{children}</Pills>
  </Shelf>
);

const TopBar = () => (
  <Header>
    <Brand>
      <PlainButton aria-label="应用"><AppsIcon /></PlainButton>
      <LogoBox><Logo /></LogoBox>
      <BrandName>火山引擎</BrandName>
      <BrandRule />
      <span>智能数据洞察</span>
    </Brand>
    <Nav>
      {navItems.map((n) => <NavLink key={n.label} href="#" $active={n.active}>{n.label}{n.caret && <Caret size={16} />}</NavLink>)}
    </Nav>
    <ProjectPicker><span>默认...</span><span>/验收测试项目1</span><Caret size={16} /></ProjectPicker>
    <HeaderTools>
      <PlainButton aria-label="服务"><ServiceIcon /></PlainButton>
      <PlainButton aria-label="帮助"><HelpIcon /></PlainButton>
      <BellButton aria-label="通知"><BellIcon /><Badge>15</Badge></BellButton>
      <Language><LangIcon />简体中文</Language>
      <Avatar>A</Avatar>
    </HeaderTools>
  </Header>
);

const QueryToolbar = () => (
  <Toolbar>
    <ToolGroup $gap={38}>
      <PlainButton aria-label="撤销"><UndoIcon /></PlainButton>
      <PlainButton aria-label="重做"><UndoIcon flip /></PlainButton>
      <PlainButton aria-label="刷新"><RefreshIcon /></PlainButton>
    </ToolGroup>
    <ToolRule />
    <ToolGroup $gap={38}>
      <PlainButton aria-label="SQL"><SqlIcon /></PlainButton>
      <ToolGroup $gap={22}>
        <PlainButton aria-label="下载"><ToolGroup $gap={8}><DownloadIcon /><Caret size={12} color="#55575b" /></ToolGroup></PlainButton>
        <PlainButton aria-label="预警"><ToolGroup $gap={8}><AlarmIcon /><Caret size={10} color="#55575b" /></ToolGroup></PlainButton>
      </ToolGroup>
    </ToolGroup>
    <ToolRule />
    <ToolGroup $gap={20}>
      <PlainButton aria-label="设置"><Gear size={30} /></PlainButton>
      <QueryName>未保存的查询</QueryName>
      <PlainButton aria-label="重命名"><PencilIcon /></PlainButton>
    </ToolGroup>
    <SaveActions>
      <SaveButton disabled><SaveAsIcon />另存为</SaveButton>
      <SaveButton $primary><SaveIcon />保存</SaveButton>
    </SaveActions>
  </Toolbar>
);

const DatasetSidebar = () => (
  <Sidebar>
    <Collapse aria-label="收起"><Chevron dir="left" w={9} h={16} color="#444" /></Collapse>
    <SideHead>
      <h2>数据集</h2>
      <PlainButton aria-label="切换数据集"><DocSwapIcon /></PlainButton>
      <PlainButton aria-label="更多"><MoreIcon /></PlainButton>
    </SideHead>
    <DatasetName>OKR表格_test</DatasetName>
    <SearchRow>
      <SearchBox><SearchIcon /><input placeholder="输入字段信息" aria-label="输入字段信息" /></SearchBox>
      <FilterButton aria-label="筛选"><FilterIcon /></FilterButton>
    </SearchRow>
    <FieldGroup>
      <h2>维度</h2>
      <ul>{dimensions.map((d, i) => <FieldItem key={d}>{i === 0 ? <CalendarField /> : <TextField />}{d}</FieldItem>)}</ul>
    </FieldGroup>
    <FieldGroup $split>
      <DragHandle />
      <h2>指标</h2>
      <ul>{metrics.map(([tag, name]) => <FieldItem key={name}><NumberTag>{tag}</NumberTag>{name}</FieldItem>)}</ul>
    </FieldGroup>
  </Sidebar>
);

const ChartSidebar = () => (
  <ChartPanel>
    <Collapse aria-label="收起"><Chevron dir="left" w={9} h={16} color="#444" /></Collapse>
    <Tabs role="tablist">
      <Tab role="tab" aria-selected $active>图表</Tab>
      <Tab role="tab">分析</Tab>
    </Tabs>
    <ScrollArea>
      <ScrollBody>
        <ChartGrid>
          {charts.map((c) => (
            <ChartCell key={c.id} aria-label={c.label} $selected={c.selected}>
              <svg width="36" height="36" viewBox="0 0 36 36" aria-hidden="true">{c.art}</svg>
              {c.caret && <CellCaret width="10" height="6"><path d="M0 0h10L5 6Z" fill="#bccfff" /></CellCaret>}
              {c.tag && <Recommend>{c.tag}</Recommend>}
            </ChartCell>
          ))}
        </ChartGrid>
        <CustomCharts>
          <PlainButton aria-label="添加图表">
            <svg width="38" height="38" viewBox="0 0 38 38" fill="none" stroke="#2f73f2" aria-hidden="true">
              <rect x="2" y="2" width="34" height="34" rx="5" strokeWidth="3" strokeDasharray="3.300 3.100" />
              <path d="M10 19h18M19 10v18" strokeWidth="3.600" />
            </svg>
          </PlainButton>
        </CustomCharts>
        <Section>
          <SectionHead><span>基本格式</span><Chevron dir="up" w={20} h={10} /></SectionHead>
          <SectionBody>
            <Segments>
              <Segment>平铺展示</Segment>
              <Segment $active>树形展示</Segment>
            </Segments>
            <LevelLabel htmlFor="level">默认展开层级</LevelLabel>
            <LevelPicker>
              <select id="level" defaultValue="1"><option>1</option><option>2</option></select>
              <Caret size={16} color="#8a90a0" />
            </LevelPicker>
          </SectionBody>
        </Section>
        {["截止日期", "表格列", "计算方式", "同环比", "条件格式"].map((s) => (
          <Section key={s}>
            <SectionHead><span>{s}</span>{s === "计算方式" && <InfoIcon />}<Chevron dir="down" w={20} h={10} /></SectionHead>
          </Section>
        ))}
      </ScrollBody>
      <ScrollTrack><ScrollThumb /></ScrollTrack>
    </ScrollArea>
  </ChartPanel>
);

const QueryShelves = () => (
  <Shelves>
    <ShelfRow label="日期">
      <PillSlot>
        <FieldPill tone="blue">付费日期</FieldPill>
        <Highlight $top={-9} $width={65} $height={55} />
        <Menu>
          <MenuItem>修改字段</MenuItem>
          <MenuItem>日期补全<Chevron dir="right" /></MenuItem>
          <MenuItem $apart>设置字段信息</MenuItem>
          <Highlight $top={143} $width={213} $height={81} />
        </Menu>
      </PillSlot>
    </ShelfRow>
    <ShelfRow label="维度"><Pill $tone="active" aria-label="维度字段" /></ShelfRow>
    <ShelfRow label="指标">
      <FieldPill tone="green">求和(收入)</FieldPill>
      <FieldPill tone="green">求和(成本)</FieldPill>
      <FieldPill tone="green">求和(利润)</FieldPill>
    </ShelfRow>
    <ShelfRow label="筛选"><FieldPill tone="green" wide>求和 付费类型</FieldPill></ShelfRow>
  </Shelves>
);

const OkrTable = () => (
  <Table>
    <colgroup><col style={{ width: 104 }} />{columns.map(([t, , w]) => <col key={t} style={{ width: w }} />)}</colgroup>
    <thead>
      <tr><th aria-label="指标" />{columns.map(([title, range]) => <th key={title} scope="col">{title}<small>{range}</small></th>)}</tr>
    </thead>
    <tbody>
      {rows.map(([name, ...cells]) => (
        <tr key={name}>
          <th scope="row">{name}</th>
          {cells.map((v, i) => <td key={i}>{i === 5 ? <Rate><TrendUp />{v}</Rate> : v}</td>)}
        </tr>
      ))}
    </tbody>
  </Table>
);

export default function App() {
  return (
    <Page>
      <GlobalStyle />
      <TopBar />
      <QueryToolbar />
      <Workspace>
        <DatasetSidebar />
        <ChartSidebar />
        <Main>
          <QueryShelves />
          <Results>
            <ResultBar>
              <ActionButton><ExpandIcon />全屏</ActionButton>
              <ActionButton><PlayIcon />查询</ActionButton>
              <AutoQuery><input type="checkbox" defaultChecked />自动查询</AutoQuery>
              <Stats><span>耗时 <b>235</b> ms， 展示 <b>3</b> 条</span><a href="#">有疑问?</a></Stats>
            </ResultBar>
            <DateBar>
              <span>季度时间进度：<b>70.3% (64天/91天)</b></span>
              <DateField>截止日期：<DateBox><input defaultValue="2025-06-03" /><CalendarIcon /></DateBox></DateField>
            </DateBar>
            <OkrTable />
          </Results>
        </Main>
      </Workspace>
      <Watermark aria-hidden="true">
        <defs>
          <pattern id="mark" width="800" height="300" patternUnits="userSpaceOnUse">
            <text x="8" y="123" transform="rotate(-15 8 123)" fontFamily={font} fontSize="27" fill="#000" fillOpacity="0.06">admin</text>
          </pattern>
        </defs>
        <rect width="100%" height="100%" fill="url(#mark)" />
      </Watermark>
      <BottomShade />
    </Page>
  );
}
